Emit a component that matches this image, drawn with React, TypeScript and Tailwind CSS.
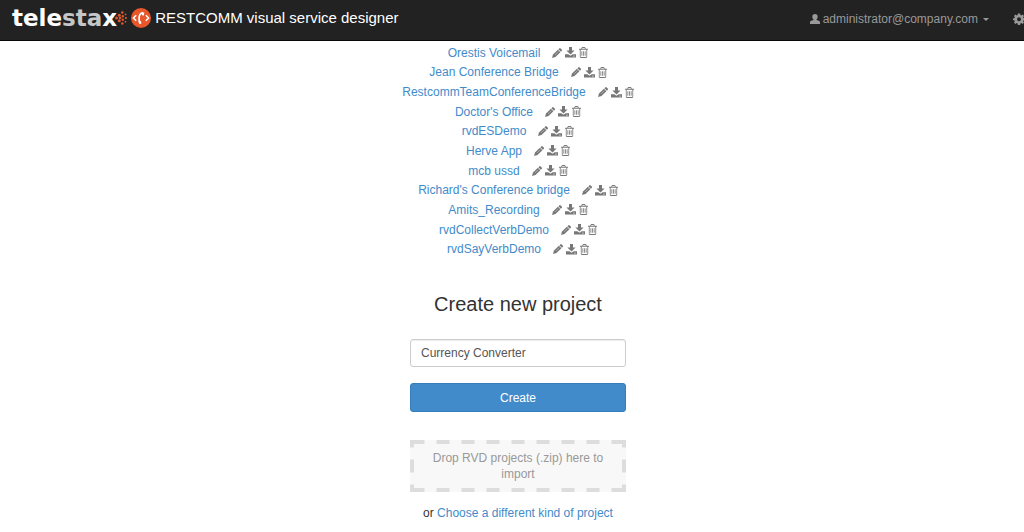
import { useState } from "react";

const projects = [
  "Orestis Voicemail",
  "Jean Conference Bridge",
  "RestcommTeamConferenceBridge",
  "Doctor's Office",
  "rvdESDemo",
  "Herve App",
  "mcb ussd",
  "Richard's Conference bridge",
  "Amits_Recording",
  "rvdCollectVerbDemo",
  "rvdSayVerbDemo",
];

function PencilIcon() {
  return (
    <svg viewBox="0 0 10 10" className="h-2.5 w-2.5" fill="currentColor" aria-hidden="true">
      <path d="M7.2.4a1.100 1.100 0 0 1 1.500 0l1 1a1.100 1.100 0 0 1 0 1.500l-.8.8-2.500-2.500z" />
      <path d="M5.900 1.700l2.500 2.500-4.900 4.900L0 10l1-3.400z" />
      <path d="M3 6.900l3.300-3.300" stroke="#fff" strokeWidth=".4" />
    </svg>
  );
}

function SaveIcon() {
  return (
    <svg viewBox="0 0 11 11" className="h-[11px] w-[11px]" fill="currentColor" aria-hidden="true">
      <path d="M4 0h3v3.500h2.600L5.500 7.400 1.400 3.500H4z" />
      <path d="M0 7.300h3.300l2.200 1.500 2.200-1.500H11V10.600H0z" />
      <path d="M8 9.100h1.800" stroke="#fff" strokeWidth=".6" />
    </svg>
  );
}

function TrashIcon() {
  return (
    <svg viewBox="192 128 1408 1536" className="h-[11px] w-[9px]" preserveAspectRatio="none" fill="currentColor" aria-hidden="true">
      <path d="M704 736v576q0 14-9 23t-23 9h-64q-14 0-23-9t-9-23v-576q0-14 9-23t23-9h64q14 0 23 9t9 23zm256 0v576q0 14-9 23t-23 9h-64q-14 0-23-9t-9-23v-576q0-14 9-23t23-9h64q14 0 23 9t9 23zm256 0v576q0 14-9 23t-23 9h-64q-14 0-23-9t-9-23v-576q0-14 9-23t23-9h64q14 0 23 9t9 23zm128 724v-948h-896v948q0 22 7 40.5t14.5 27 10.5 8.5h832q3 0 10.5-8.5t14.5-27 7-40.5zm-672-1076h448l-48-117q-7-9-17-11h-317q-10 2-17 11zm928 32v64q0 14-9 23t-23 9h-96v948q0 83-47 143.5t-113 60.5h-832q-66 0-113-58.5t-47-141.5v-952h-96q-14 0-23-9t-9-23v-64q0-14 9-23t23-9h309l70-167q15-37 54-63t79-26h320q40 0 79 26t54 63l70 167h309q14 0 23 9t9 23z" />
    </svg>
  );
}

function UserIcon() {
  return (
    <svg viewBox="0 0 10 10" className="h-2.5 w-2.5" fill="currentColor" aria-hidden="true">
      <path d="M5 0c1.700 0 2.700 1.100 2.700 2.700 0 1.200-.5 2.100-1.200 2.800v.5l2.400.8c.8.3 1.100.9 1.100 1.600V10H0V8.400c0-.7.3-1.300 1.100-1.600l2.400-.8v-.5C2.800 4.800 2.300 3.900 2.300 2.700 2.300 1.100 3.300 0 5 0z" />
    </svg>
  );
}

function GearIcon() {
  return (
    <svg viewBox="0 0 24 24" className="h-3 w-3 shrink-0" fill="currentColor" aria-hidden="true">
      <path
        fillRule="evenodd"
        d="M9.800 1h4.400l.6 3 1.800.8L19.200 3 22 5.800l-1.800 2.600.8 1.800 3 .6v3.400l-3 .6-.8 1.800 1.800 2.600-2.800 2.800-2.600-1.800-1.800.8-.6 3H9.800l-.6-3-1.800-.8L4.800 22 2 19.200l1.800-2.600-.8-1.800-3-.6v-3.400l3-.6.8-1.800L2 5.800 4.800 3l2.600 1.800L9.200 4zM12 8.500a4 4 0 1 0 0 8 4 4 0 0 0 0-8z"
      />
    </svg>
  );
}

function LogoDots() {
  return (
    <svg viewBox="0 0 12 18" className="-ml-0.5 h-[18px] w-3" fill="#e0592e" aria-hidden="true">
      <circle cx="1.500" cy="9" r="1.500" />
      <circle cx="4.300" cy="6.200" r="1.500" />
      <circle cx="4.300" cy="11.800" r="1.500" />
      <circle cx="5" cy="9" r="1.300" />
      <circle cx="7.300" cy="3.500" r="1.300" />
      <circle cx="7.800" cy="7.300" r="1.200" />
      <circle cx="7.800" cy="10.800" r="1.200" />
      <circle cx="7.300" cy="14.500" r="1.300" />
      <circle cx="10.900" cy="9" r="1.100" />
      <circle cx="10.500" cy="5.400" r=".9" />
      <circle cx="10.500" cy="12.700" r=".9" />
    </svg>
  );
}

function DesignerMark() {
  return (
    <svg viewBox="0 0 20 20" className="h-5 w-5" fill="none" aria-hidden="true">
      <circle cx="10" cy="10" r="10" fill="#e8572a" />
      <path d="M5.200 7.200L2.400 10l2.800 2.800M14.800 7.200l2.800 2.800-2.800 2.800" stroke="#fff" strokeWidth="1.500" />
      <path d="M12 5C9.600 4.700 8.300 7 8.100 9.500c-.1 2 0 4 .7 5.500" stroke="#fff" strokeWidth="1.700" />
      <path d="M11 4l2.300.8-.5 3-2-.8zM7.600 13.500l2.300-.4.500 2.500-2 .6z" fill="#fff" />
    </svg>
  );
}

export default function App() {
  const [name, setName] = useState("Currency Converter");
  return (
    <div className="overflow-x-hidden bg-white font-['Liberation_Sans',Arial,sans-serif] text-xs text-[#333]">
      <header className="flex h-[41px] items-center justify-between border-b border-[#080808] bg-[#222] pl-3">
        <a href="#" className="flex items-center pb-1 text-white">
          <span className="font-['DejaVu_Sans',sans-serif] text-[23px] leading-8 font-bold">
            tele<span className="text-[#c4c6c8]">sta</span>x
          </span>
          <LogoDots />
          <span className="ml-1 flex items-center gap-1">
            <DesignerMark />
            <span className="text-[15px]">RESTCOMM visual service designer</span>
          </span>
        </a>
        <nav className="flex shrink-0 items-center gap-6 pb-0.5 text-[#999]">
          <button type="button" className="flex items-center gap-[3px]">
            <UserIcon />
            administrator@company.com
            <span className="ml-0.5 border-x-[3px] border-t-[3px] border-x-transparent border-t-[#999]" />
          </button>
          <button type="button" aria-label="Settings" className="-mr-px">
            <GearIcon />
          </button>
        </nav>
      </header>

      <main className="ml-3 flex flex-col items-center pt-0.5">
        <ul className="grid h-[216px] auto-rows-fr">
          {projects.map((project) => (
            <li key={project} className="flex items-center justify-center gap-3">
              <a href="#" className="text-[#428bca]">{project}</a>
              <span className="flex items-center gap-[3px] text-[#777]">
                <button type="button" aria-label={`Edit ${project}`}><PencilIcon /></button>
                <button type="button" aria-label={`Download ${project}`}><SaveIcon /></button>
                <button type="button" aria-label={`Delete ${project}`}><TrashIcon /></button>
              </span>
            </li>
          ))}
        </ul>

        <form className="mt-8 flex w-[216px] flex-col" onSubmit={(e) => e.preventDefault()}>
          <h1 className="text-center text-xl leading-[26px]">
            <label htmlFor="project-name">Create new project</label>
          </h1>
          <input
            id="project-name"
            type="text"
            value={name}
            onChange={(e) => setName(e.target.value)}
            className="mt-[22px] h-7 rounded-[3px] border border-[#ccc] px-2.5 text-[#555] shadow-[inset_0_1px_1px_rgba(0,0,0,0.075)]"
          />
          <button type="submit" className="mt-4 h-[29px] rounded-[3px] border border-[#357ebd] bg-[#428bca] text-white">
            Create
          </button>
        </form>

        <div className="mt-7 w-[216px] bg-[#f8f8f8] bg-[image:linear-gradient(90deg,transparent_6px,#ddd_6px,#ddd_19px,transparent_19px),linear-gradient(90deg,transparent_6px,#ddd_6px,#ddd_19px,transparent_19px),linear-gradient(transparent_6px,#ddd_6px,#ddd_19px,transparent_19px),linear-gradient(transparent_6px,#ddd_6px,#ddd_19px,transparent_19px)] [background-position:center_top,center_bottom,left_center,right_center] [background-repeat:repeat-x,repeat-x,repeat-y,repeat-y] [background-size:25px_4px,25px_4px,4px_25px,4px_25px] px-5 py-2.5 text-center leading-4 text-[#999]">
          Drop RVD projects (.zip) here to import
        </div>
        <p className="mt-[13px] leading-4">
          or <a href="#" className="text-[#428bca]">Choose a different kind of project</a>
        </p>
      </main>
    </div>
  );
}
